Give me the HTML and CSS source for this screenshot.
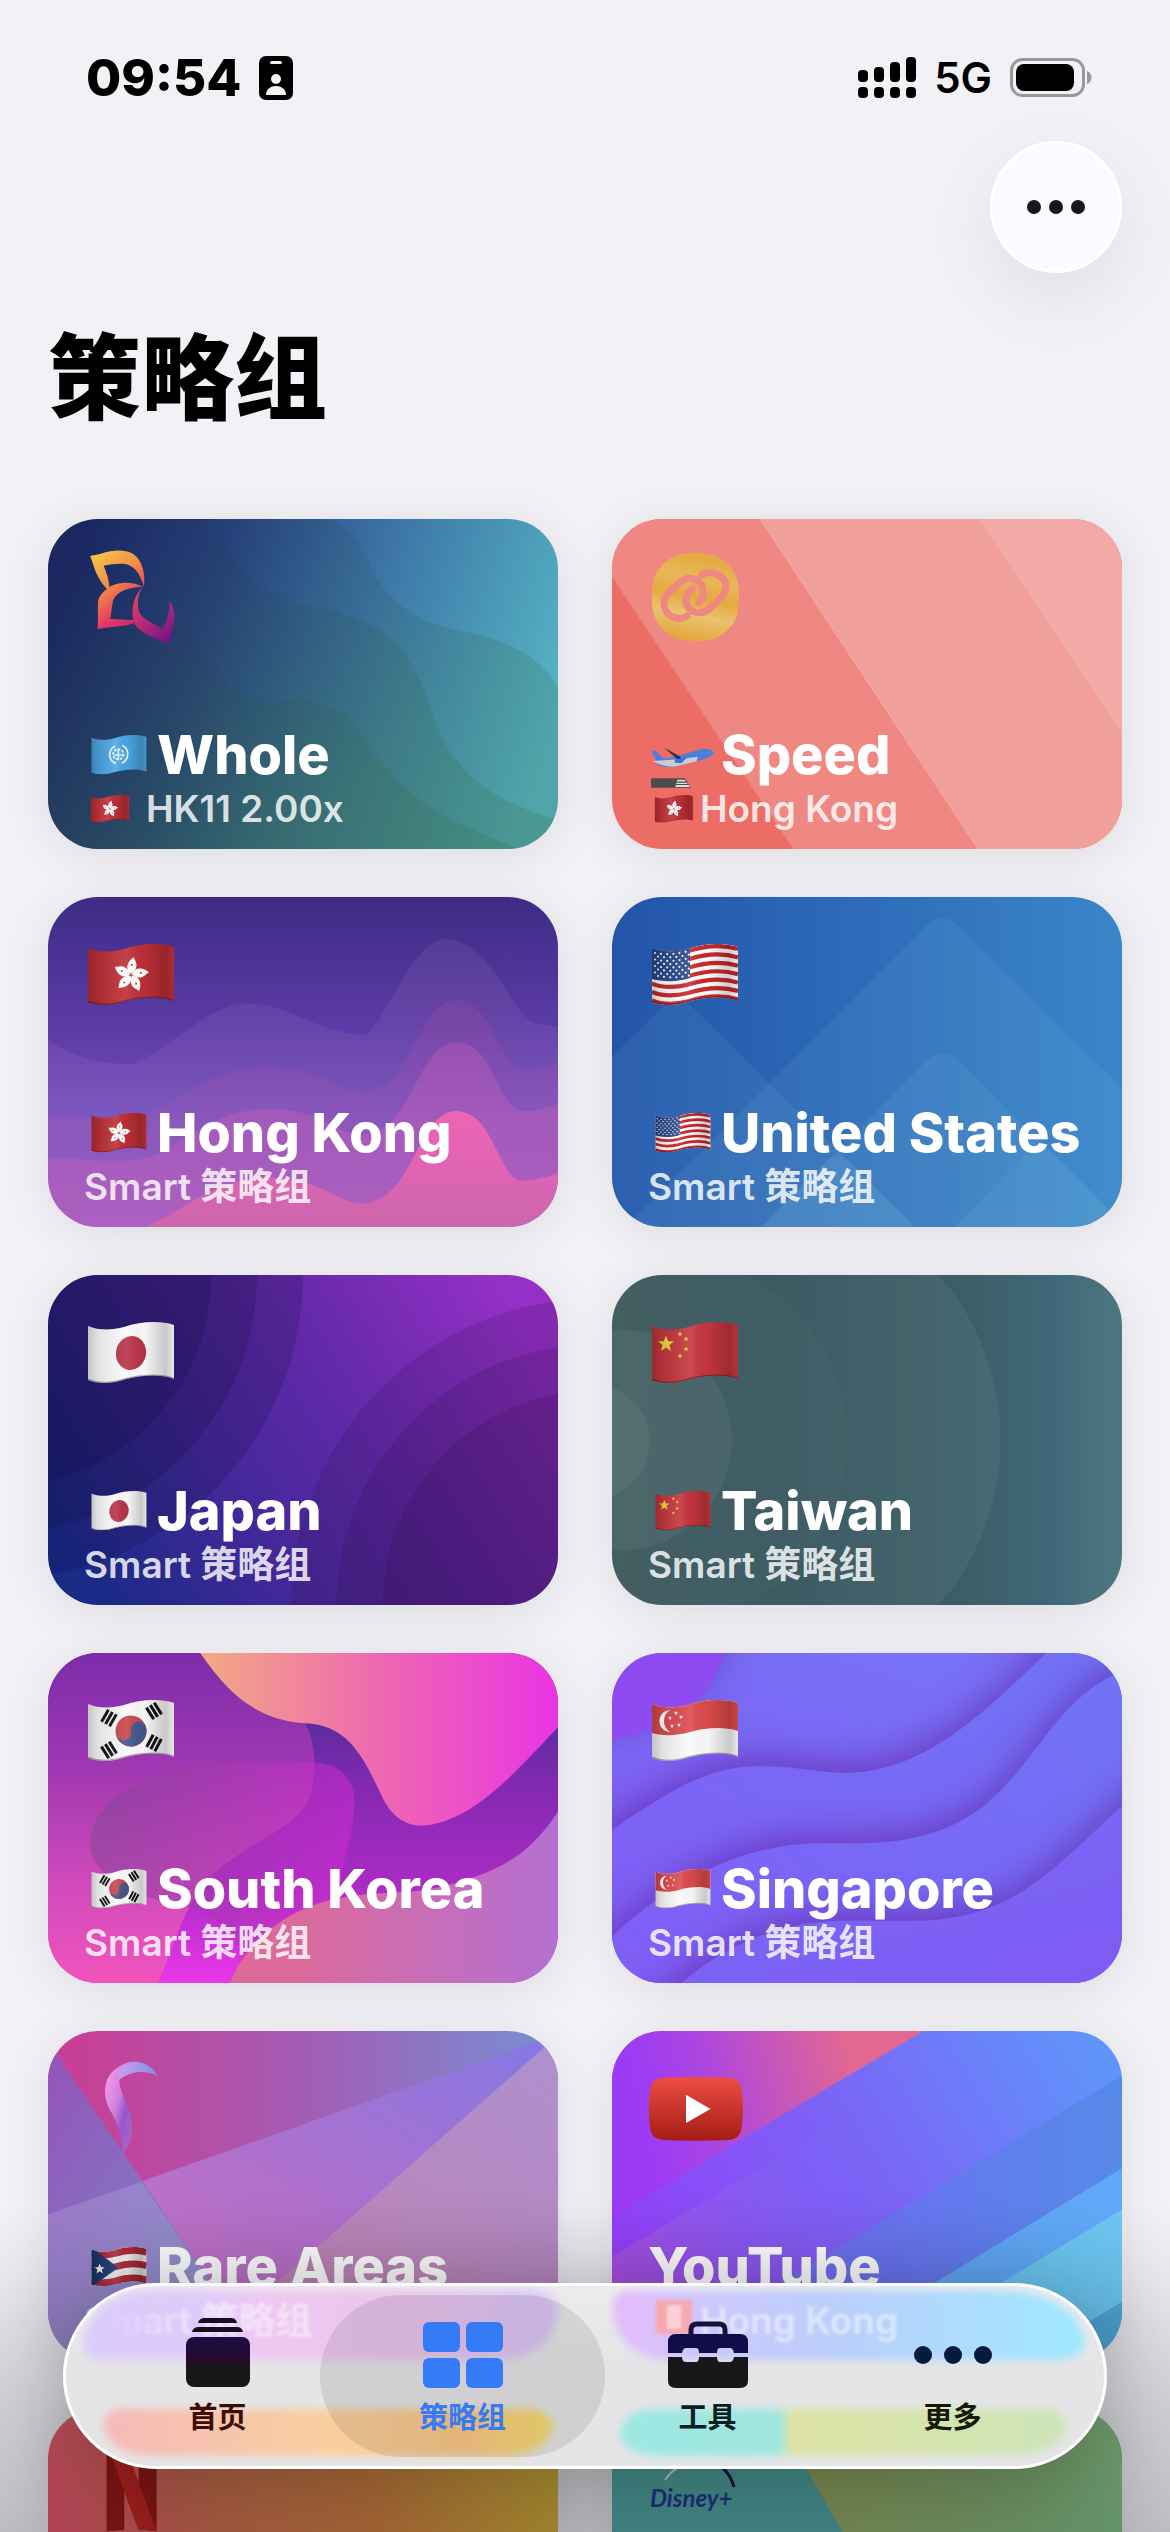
FILE: index.html
```html
<!DOCTYPE html>
<html lang="zh-CN">
<head>
<meta charset="utf-8">
<meta name="viewport" content="width=device-width, initial-scale=1">
<title>策略组</title>
<link rel="stylesheet" href="styles.css">
</head>
<body>

<!-- shared flag symbols -->
<svg class="sprite" width="0" height="0" aria-hidden="true">
  <defs>
    <clipPath id="wave"><path d="M0 4C10 8.500 24 8.500 36 5C52 0 70-2 86 3V57C70 51 52 54 38 57C24 62 10 62 0 58Z"/></clipPath>
    <linearGradient id="fold" x1="0" x2="1" y1="0" y2="0">
      <stop offset="0" stop-color="#000" stop-opacity=".22"/>
      <stop offset=".12" stop-color="#000" stop-opacity=".1"/>
      <stop offset=".45" stop-color="#fff" stop-opacity=".1"/>
      <stop offset=".65" stop-color="#000" stop-opacity=".02"/>
      <stop offset=".9" stop-color="#000" stop-opacity=".2"/>
      <stop offset="1" stop-color="#000" stop-opacity=".08"/>
    </linearGradient>
    <path id="star" d="M0-10L2.600-3.200L9.500-3.100L4 1.200L5.900 8.100L0 4.100L-5.900 8.100L-4 1.200L-9.500-3.100L-2.600-3.200Z"/>
    <path id="edge" d="M0 58C10 62 24 62 38 57C52 54 70 51 86 57" fill="none" stroke="#000" stroke-opacity=".3" stroke-width="2.500"/>
    <path id="stripe" d="M0 6C10 10 24 10 36 7C52 2 70 0 86 5" fill="none" stroke="#c9282d" stroke-width="4.200"/>
    <g id="stripes">
      <use href="#stripe"/><use href="#stripe" y="8.400"/><use href="#stripe" y="16.800"/><use href="#stripe" y="25.200"/>
      <use href="#stripe" y="33.600"/><use href="#stripe" y="42"/><use href="#stripe" y="50.400"/>
    </g>
    <g id="bars"><path d="M-6-4H6M-6 0H6M-6 4H6" stroke="#111" stroke-width="2.600"/></g>
  </defs>
  <symbol id="flag-hk" viewBox="0 0 86 62">
    <g clip-path="url(#wave)"><path fill="#bd2f36" d="M0 0H86V62H0Z"/>
      <g fill="#fff" transform="translate(43 31)">
        <g id="petal"><path d="M0-1C-5-4-6-12 3-18C3-15 7-12 5-7C4-4 2-3 0-1Z"/><circle cx="1" cy="-10" r="1" fill="#bd2f36"/></g>
        <use href="#petal" transform="rotate(72)"/><use href="#petal" transform="rotate(144)"/><use href="#petal" transform="rotate(216)"/><use href="#petal" transform="rotate(288)"/>
      </g>
      <path fill="url(#fold)" d="M0 0H86V62H0Z"/><use href="#edge"/></g>
  </symbol>
  <symbol id="flag-us" viewBox="0 0 86 62">
    <g clip-path="url(#wave)"><path fill="#fff" d="M0 0H86V62H0Z"/><use href="#stripes"/>
      <path fill="#2a4a8c" d="M0 0H38V34C26 38 12 38 0 35Z"/>
      <g stroke="#fff" stroke-width="2.200" stroke-linecap="round" stroke-dasharray="0 6.200" fill="none">
        <path d="M3 9Q18 12 37 7M6 12.500Q20 15 37 10.500M3 15.500Q18 19 37 14M6 19Q20 22 37 17.500M3 22Q18 25.500 37 21M6 25.500Q20 28.500 37 24.500M3 28.500Q18 32 37 28M6 32Q20 35 37 31.500"/>
      </g>
      <path fill="url(#fold)" d="M0 0H86V62H0Z"/><use href="#edge"/></g>
  </symbol>
  <symbol id="flag-jp" viewBox="0 0 86 62">
    <g clip-path="url(#wave)"><path fill="#fbfbfb" d="M0 0H86V62H0Z"/>
      <ellipse cx="43" cy="31" rx="15" ry="17" fill="#b93248" transform="rotate(12 43 31)"/>
      <path fill="url(#fold)" d="M0 0H86V62H0Z"/><use href="#edge"/></g>
  </symbol>
  <symbol id="flag-cn" viewBox="0 0 86 62">
    <g clip-path="url(#wave)"><path fill="#c5363d" d="M0 0H86V62H0Z"/>
      <g fill="#f0d83a"><use href="#star" transform="translate(14 22) scale(.85)"/><use href="#star" transform="translate(28 12) scale(.27)"/><use href="#star" transform="translate(34 17) scale(.27)"/><use href="#star" transform="translate(34 27) scale(.27)"/><use href="#star" transform="translate(28 34) scale(.27)"/></g>
      <path fill="url(#fold)" d="M0 0H86V62H0Z"/><use href="#edge"/></g>
  </symbol>
  <symbol id="flag-sg" viewBox="0 0 86 62">
    <g clip-path="url(#wave)"><path fill="#fbfbfb" d="M0 0H86V62H0Z"/>
      <path fill="#dd4a4c" d="M0 0H86V31C70 26 54 28 38 32C24 36 10 36 0 33Z"/>
      <path fill="#fff" d="M18 10C4 11 4 31 18 32C10 27 10 15 18 10Z"/>
      <g fill="#fff"><use href="#star" transform="translate(24 13) scale(.22)"/><use href="#star" transform="translate(18 18) scale(.22)"/><use href="#star" transform="translate(29 17) scale(.22)"/><use href="#star" transform="translate(20 26) scale(.22)"/><use href="#star" transform="translate(27 25) scale(.22)"/></g>
      <path fill="url(#fold)" d="M0 0H86V62H0Z"/><use href="#edge"/></g>
  </symbol>
  <symbol id="flag-kr" viewBox="0 0 86 62">
    <g clip-path="url(#wave)"><path fill="#fbfbfb" d="M0 0H86V62H0Z"/>
      <g transform="rotate(-12 43 31)"><circle cx="43" cy="31" r="15.500" fill="#c6474c"/>
        <path fill="#44558a" d="M27.500 31A15.500 15.500 0 0 0 58.500 31A7.750 7.750 0 0 0 43 31A7.750 7.750 0 0 1 27.500 31Z"/></g>
      <use href="#bars" transform="translate(21 18) rotate(-60) scale(1.150)"/><use href="#bars" transform="translate(66 11) rotate(58) scale(1.150)"/>
      <use href="#bars" transform="translate(21 50) rotate(58) scale(1.150)"/><use href="#bars" transform="translate(66 43) rotate(-62) scale(1.150)"/>
      <path fill="url(#fold)" d="M0 0H86V62H0Z"/><use href="#edge"/></g>
  </symbol>
  <symbol id="flag-un" viewBox="0 0 86 62">
    <g clip-path="url(#wave)"><path fill="#4ba6e4" d="M0 0H86V62H0Z"/>
      <g fill="none" stroke="#e6f4ff"><circle cx="42" cy="30" r="8" stroke-width="3" stroke-dasharray="4 2"/><path stroke-width="2.500" d="M37 17C25 24 26 39 38 44M48 16C60 22 59 38 47 44M36 31H49M42 23V38"/></g>
      <path fill="url(#fold)" d="M0 0H86V62H0Z"/></g>
  </symbol>
  <symbol id="flag-pr" viewBox="0 0 86 62">
    <g clip-path="url(#wave)"><path fill="#f6f6f6" d="M0 0H86V62H0Z"/>
      <g fill="none" stroke="#b52c3c" stroke-width="10.500"><path id="pr1" d="M0 9C10 13 24 13 36 10C52 5 70 3 86 8"/><use href="#pr1" y="21"/><use href="#pr1" y="43"/></g>
      <path fill="#1d3a74" d="M0 0V62L42 32Z"/><use href="#star" fill="#fff" transform="translate(13 34) scale(.85)"/>
      <path fill="url(#fold)" d="M0 0H86V62H0Z"/><use href="#edge"/></g>
  </symbol>
</svg>

<div class="screen">
  <header class="top">
    <div class="status">
      <div class="status-side">
        <span class="clock">09:54</span>
        <svg width="34" height="44" viewBox="0 0 34 44" aria-hidden="true"><rect width="34" height="44" rx="7"/><g fill="#f2f1f6"><rect x="11" y="5" width="12" height="3" rx="1.500"/><circle cx="17" cy="23" r="5"/><path d="M7 39C7 27 27 27 27 39Z"/></g></svg>
      </div>
      <div class="status-side">
        <svg width="58" height="42" viewBox="0 0 58 42" aria-hidden="true"><rect y="13" width="10" height="12" rx="4"/><rect x="16" y="10" width="10" height="15" rx="4"/><rect x="32" y="5" width="10" height="20" rx="4"/><rect x="48" width="10" height="25" rx="4"/><rect y="30" width="10" height="11" rx="4"/><rect x="16" y="30" width="10" height="11" rx="4"/><rect x="32" y="30" width="10" height="11" rx="4"/><rect x="48" y="30" width="10" height="11" rx="4"/></svg>
        <span class="network">5G</span>
        <svg width="82" height="40" viewBox="0 0 82 40" aria-hidden="true"><rect x="1.500" y="1.500" width="72" height="36" rx="11" fill="none" stroke="#98979b" stroke-width="3"/><rect x="6" y="6" width="58" height="27" rx="8"/><path fill="#98979b" d="M77 13C83 15 83 24 77 26Z"/></svg>
      </div>
    </div>
    <button class="more" type="button" aria-label="更多选项">
      <svg width="60" height="16" viewBox="0 0 60 16" aria-hidden="true"><circle cx="8" cy="8" r="7"/><circle cx="30" cy="8" r="7"/><circle cx="52" cy="8" r="7"/></svg>
    </button>
    <h1>策略组</h1>
  </header>

  <main class="grid">
    <a class="card" href="#whole">
      <svg class="art" viewBox="50 57 1428 990" preserveAspectRatio="none" aria-hidden="true">
        <defs><linearGradient id="g1" x1="0" y1=".4" x2="1" y2=".6"><stop offset="0" stop-color="#1b2766"/><stop offset=".28" stop-color="#274380"/><stop offset=".6" stop-color="#3d78a8"/><stop offset="1" stop-color="#56b4c4"/></linearGradient>
        <linearGradient id="g1s" gradientUnits="userSpaceOnUse" x1="150" y1="150" x2="800" y2="950"><stop offset="0" stop-color="#1a2a50" stop-opacity=".1"/><stop offset="1" stop-color="#34683e" stop-opacity=".2"/></linearGradient></defs>
        <path fill="url(#g1)" d="M50 57H1478V1047H50Z"/>
        <g fill="url(#g1s)">
          <path d="M820 57C960 90 920 200 1020 300C1130 400 1200 380 1290 415C1380 450 1430 480 1478 560V1047H50V57Z"/>
          <path d="M505 57C580 200 600 280 830 330C1000 365 1060 450 1110 590C1150 710 1180 870 1478 960V1047H50V57Z"/>
          <path d="M100 57C150 200 150 330 340 360C500 380 500 480 560 550C620 620 680 600 740 600C900 605 920 700 970 770C1070 900 1120 940 1370 1047H50V57Z"/>
        </g>
      </svg>
      <svg class="icon" viewBox="151 147 269 288" preserveAspectRatio="none" aria-hidden="true">
        <defs><linearGradient id="r" gradientUnits="userSpaceOnUse" x1="180" y1="160" x2="400" y2="420"><stop offset="0" stop-color="#f6c845"/><stop offset=".3" stop-color="#f08a48"/><stop offset=".52" stop-color="#e83a62"/><stop offset=".75" stop-color="#b02878"/><stop offset="1" stop-color="#6c1285"/></linearGradient></defs>
        <g fill="url(#r)"><path d="M168 168L196 162C230 150 250 150 268 154C310 160 325 215 319 262C312 235 300 200 268 192C245 190 225 193 206 197C215 220 222 245 222 262L216 268C180 225 180 195 168 168Z"/><path d="M216 266C240 245 285 242 316 260C280 262 245 270 233 300C228 320 228 340 225 357C250 355 275 362 292 360L290 370C265 382 225 378 189 388C192 350 188 320 191 300C195 285 205 275 216 266Z"/><path d="M317 260C300 280 300 310 305 335C320 365 350 370 370 386C385 360 392 335 391 303C405 325 408 350 401 375C396 400 394 415 389 432C350 412 300 400 289 362C283 325 290 285 317 260Z"/></g>
      </svg>
      <h2><svg class="flag" aria-hidden="true"><use href="#flag-un"/></svg>Whole</h2>
      <p><svg class="mini wide" aria-hidden="true"><use href="#flag-hk"/></svg>HK11 2.00x</p>
    </a>

    <a class="card" href="#speed">
      <svg class="art" viewBox="62 57 1428 990" preserveAspectRatio="none" aria-hidden="true">
        <path fill="#ec6c66" d="M62 57H1490V1047H62Z"/><path fill="#ef8882" d="M62 57H1490V1047H570L62 230Z"/><path fill="#f19f9a" stroke="#f5b5b1" stroke-width="2" d="M476 57H1490V1047H1087Z"/><path fill="#f2aaa7" d="M1088 57H1490V700Z"/>
      </svg>
      <svg class="icon" viewBox="0 0 96 96" aria-hidden="true">
        <defs><linearGradient id="gold" x1=".6" y1="0" x2=".4" y2="1"><stop offset="0" stop-color="#e4a93f"/><stop offset=".3" stop-color="#e9b658"/><stop offset=".5" stop-color="#e5a940"/><stop offset=".7" stop-color="#eac270"/><stop offset="1" stop-color="#e3a636"/></linearGradient></defs>
        <rect x="4" y="4" width="87" height="88" rx="38" fill="url(#gold)"/>
        <g fill="none" stroke="#ef8882" stroke-width="7" stroke-linecap="round"><path d="M39 67C31 73 16 67 16 55C15 47 22 43 32 33C44 24 55 33 55 42C56 48 54 51 51 54"/><path d="M54 26C63 20 76 26 78 36C79 45 72 49 61 60C53 67 40 64 38 53C37 46 41 42 45 39"/></g>
      </svg>
      <h2><svg class="flag" viewBox="182 703 154 119" preserveAspectRatio="none" aria-hidden="true"><path fill="#4a7fe0" d="M173 750L182 749L206 774L240 768L305 746Q335 740 344 755Q345 766 300 780L240 796Q205 800 190 792Z"/><path fill="#c9cdd2" d="M176 780L240 776L300 768L296 782L240 796Q205 800 176 780Z"/><path fill="#2b3340" d="M207 741L250 766L258 778L245 777Z"/><path fill="#3e6fd4" d="M235 776L270 770L255 786L238 786Z"/><path fill="#4c4c4c" d="M171 832H264L281 860H171Z"/><path fill="#ddd" d="M243 836H264L267 841H242ZM241 845H270L272 849H240ZM239 852H275L278 858H238Z"/></svg>Speed</h2>
      <p><svg class="mini" aria-hidden="true"><use href="#flag-hk"/></svg>Hong Kong</p>
    </a>

    <a class="card" href="#hong-kong">
      <svg class="art" viewBox="50 51 1428 990" preserveAspectRatio="none" aria-hidden="true">
        <defs><linearGradient id="g3" x1="0" y1="0" x2="0" y2="1"><stop offset="0" stop-color="#3d2c86"/><stop offset=".4" stop-color="#5d3ba6"/><stop offset=".68" stop-color="#7550bf"/><stop offset="1" stop-color="#8a5cc8"/></linearGradient>
        <linearGradient id="g3b" x1="0" y1="0" x2="0" y2="1"><stop offset="0" stop-color="#ee65b3"/><stop offset=".45" stop-color="#e264b4"/><stop offset="1" stop-color="#cb66ad"/></linearGradient></defs>
        <path fill="url(#g3)" d="M50 51H1478V1041H50Z"/>
        <path fill="#e0b0d0" fill-opacity=".09" d="M50 480C120 530 200 555 290 553C400 500 500 370 610 370C730 375 800 455 938 467C1000 420 1070 178 1165 177C1290 180 1350 410 1415 430L1478 440V1041H50Z"/>
        <path fill="#c854a8" fill-opacity=".17" d="M50 710C150 705 220 720 330 700C430 660 500 560 680 560C820 565 860 640 935 638C1080 620 1080 362 1195 360C1300 365 1310 560 1375 568C1420 568 1450 555 1478 545V1041H50Z"/>
        <path fill="#d060bc" fill-opacity=".34" d="M50 836C150 831 220 855 330 833C430 800 500 686 680 686C820 691 860 766 935 764C1080 746 1080 488 1195 486C1300 491 1310 686 1375 693C1420 693 1450 681 1478 671V1041H50Z"/>
        <path fill="url(#g3b)" d="M320 1041C430 1000 500 893 680 893C820 898 860 972 935 971C1080 955 1080 695 1195 693C1300 698 1310 895 1375 902C1420 902 1450 889 1478 879V1041Z"/>
      </svg>
      <svg class="big-flag" aria-hidden="true"><use href="#flag-hk"/></svg>
      <h2><svg class="flag" aria-hidden="true"><use href="#flag-hk"/></svg>Hong Kong</h2>
      <p>Smart 策略组</p>
    </a>

    <a class="card" href="#united-states">
      <svg class="art" viewBox="62 51 1428 990" preserveAspectRatio="none" aria-hidden="true">
        <defs><linearGradient id="g4"><stop offset="0" stop-color="#2354a9"/><stop offset=".5" stop-color="#2e6cb9"/><stop offset="1" stop-color="#3a86c9"/></linearGradient></defs>
        <path fill="url(#g4)" d="M62 51H1490V1041H62Z"/>
        <g fill="#8fd0e8" fill-opacity=".09"><path d="M100 1041L945 135Q985 92 1030 135L1490 625V1041Z"/><path d="M480 1041L945 540Q985 498 1030 540L1490 1030V1041Z"/><path d="M62 530L205 380Q245 340 285 380L910 1041H62Z"/><path d="M480 1041L660 845Q695 805 735 850L910 1041Z"/><path d="M1022 1041L1225 815Q1260 780 1295 815L1490 1030V1041Z"/></g>
      </svg>
      <svg class="big-flag" aria-hidden="true"><use href="#flag-us"/></svg>
      <h2><svg class="flag" aria-hidden="true"><use href="#flag-us"/></svg>United States</h2>
      <p>Smart 策略组</p>
    </a>

    <a class="card" href="#japan">
      <svg class="art" viewBox="50 45 1428 990" preserveAspectRatio="none" aria-hidden="true">
        <defs><linearGradient id="g5" x1="0" y1=".7" x2="1" y2=".3"><stop offset="0" stop-color="#1a2a86"/><stop offset=".3" stop-color="#402898"/><stop offset=".6" stop-color="#6029a8"/><stop offset="1" stop-color="#9430c6"/></linearGradient></defs>
        <path fill="url(#g5)" d="M50 45H1478V1035H50Z"/>
        <g fill="#0c0830" fill-opacity=".17"><ellipse cx="-87" cy="45" rx="851" ry="912"/><ellipse cx="-87" cy="45" rx="722" ry="774"/><ellipse cx="-87" cy="45" rx="594" ry="636"/></g>
        <g fill="#2a0a44" fill-opacity=".17"><ellipse cx="1589" cy="1035" rx="858" ry="920"/><ellipse cx="1589" cy="1035" rx="731" ry="783"/><ellipse cx="1589" cy="1035" rx="602" ry="645"/></g>
      </svg>
      <svg class="big-flag" aria-hidden="true"><use href="#flag-jp"/></svg>
      <h2><svg class="flag" aria-hidden="true"><use href="#flag-jp"/></svg>Japan</h2>
      <p>Smart 策略组</p>
    </a>

    <a class="card" href="#taiwan">
      <svg class="art" viewBox="62 45 1428 990" preserveAspectRatio="none" aria-hidden="true">
        <defs><linearGradient id="g6"><stop offset="0" stop-color="#365456"/><stop offset=".2" stop-color="#34525a"/><stop offset=".3" stop-color="#33515a"/><stop offset=".7" stop-color="#3b5f68"/><stop offset=".87" stop-color="#416879"/><stop offset="1" stop-color="#4e7780"/></linearGradient></defs>
        <path fill="url(#g6)" d="M62 45H1490V1035H62Z"/>
        <g fill="#fff" fill-opacity=".05"><ellipse cx="440" cy="540" rx="710" ry="759"/><ellipse cx="205" cy="540" rx="517" ry="555" fill-opacity=".02"/><ellipse cx="90" cy="540" rx="308" ry="330"/><ellipse cx="6" cy="545" rx="161" ry="173"/></g>
      </svg>
      <svg class="big-flag" aria-hidden="true"><use href="#flag-cn"/></svg>
      <h2><svg class="flag" aria-hidden="true"><use href="#flag-cn"/></svg>Taiwan</h2>
      <p>Smart 策略组</p>
    </a>

    <a class="card" href="#south-korea">
      <svg class="art" viewBox="50 39 1428 990" preserveAspectRatio="none" aria-hidden="true">
        <defs>
          <linearGradient id="g7" x1="0" y1="0" x2="0" y2="1"><stop offset=".2" stop-color="#5a2c9f"/><stop offset=".42" stop-color="#8529b2"/><stop offset=".7" stop-color="#aa2bc4"/><stop offset="1" stop-color="#ea36e8"/></linearGradient>
          <linearGradient id="g7a" x1="0" y1="0" x2="0" y2="1"><stop offset="0" stop-color="#7d2cab"/><stop offset=".35" stop-color="#a038b2"/><stop offset=".7" stop-color="#d04abb"/><stop offset="1" stop-color="#f054bc"/></linearGradient>
          <linearGradient id="g7b"><stop offset="0" stop-color="#7a4890" stop-opacity=".5"/><stop offset="1" stop-color="#d82ad4" stop-opacity=".5"/></linearGradient>
          <linearGradient id="g7c"><stop offset="0" stop-color="#f3a985"/><stop offset=".5" stop-color="#ee68b0"/><stop offset="1" stop-color="#ea34e4"/></linearGradient>
          <linearGradient id="g7d"><stop offset="0" stop-color="#de6a96"/><stop offset=".2" stop-color="#db6a9c"/><stop offset="1" stop-color="#b470d2"/></linearGradient>
        </defs>
        <path fill="url(#g7)" d="M50 39H1478V1029H50Z"/>
        <path fill="url(#g7a)" d="M50 39H476C560 170 640 240 770 250C800 310 805 400 780 480C740 570 600 610 500 715C420 820 400 930 358 1029H50Z"/>
        <path fill="url(#g7b)" d="M168 610C170 450 400 365 640 366L790 366C870 370 910 420 908 490C905 580 880 640 870 720L780 1029H610C600 900 520 810 430 800C330 780 168 720 168 610Z"/>
        <path fill="url(#g7c)" d="M476 39C560 170 640 240 770 250C900 255 940 370 990 480C1040 580 1120 570 1210 520C1300 470 1400 350 1478 262V39Z"/>
        <path fill="url(#g7d)" d="M560 1029C600 920 680 850 760 810C900 745 1010 770 1130 745C1320 700 1400 640 1478 515V1029Z"/>
      </svg>
      <svg class="big-flag" aria-hidden="true"><use href="#flag-kr"/></svg>
      <h2><svg class="flag" aria-hidden="true"><use href="#flag-kr"/></svg>South Korea</h2>
      <p>Smart 策略组</p>
    </a>

    <a class="card" href="#singapore">
      <svg class="art" viewBox="62 39 1428 990" preserveAspectRatio="none" aria-hidden="true">
        <defs>
          <linearGradient id="g8" gradientUnits="userSpaceOnUse" x1="500" y1="1100" x2="900" y2="100"><stop offset="0" stop-color="#8158f4"/><stop offset="1" stop-color="#7870f6"/></linearGradient>
          <linearGradient id="g8b" x1="0" y1=".8" x2="1" y2="0"><stop offset="0" stop-color="#825bf6"/><stop offset="1" stop-color="#6d78f6"/></linearGradient>
          <linearGradient id="g8c" x1="0" y1="0" x2=".5" y2="1"><stop offset="0" stop-color="#7275f6"/><stop offset="1" stop-color="#8058f4"/></linearGradient>
        </defs>
        <path fill="url(#g8)" d="M62 39H1490V1029H62Z"/>
        <path class="lift" fill="#8f4bf2" d="M-200-200H376V39C340 180 220 270 62 297H-200Z"/>
        <path class="lift" fill="url(#g8b)" d="M-200 760L62 570C250 430 350 378 475 378C600 380 640 400 730 398C950 390 1120 200 1278 39L1450-140H1800V1300H-200Z"/>
        <path class="lift" fill="url(#g8b)" d="M-200 1160L62 890C200 750 400 612 640 610C800 612 960 615 1100 500C1250 370 1300 190 1470 103L1800-40V1300H-200Z"/>
        <path class="lift" fill="url(#g8c)" d="M-50 1300L257 1029C430 870 600 842 720 842H930C1200 830 1300 680 1490 498L1800 200V1300Z"/>
      </svg>
      <svg class="big-flag" aria-hidden="true"><use href="#flag-sg"/></svg>
      <h2><svg class="flag" aria-hidden="true"><use href="#flag-sg"/></svg>Singapore</h2>
      <p>Smart 策略组</p>
    </a>

    <a class="card" href="#rare">
      <svg class="art" viewBox="128 63 1355 990" preserveAspectRatio="none" aria-hidden="true">
        <defs>
          <linearGradient id="g9"><stop offset="0" stop-color="#cb3c92"/><stop offset=".5" stop-color="#a45cb4"/><stop offset="1" stop-color="#7690d4"/></linearGradient>
          <linearGradient id="g9a" x1="0" y1="0" x2="1" y2="1"><stop offset="0" stop-color="#9650b8"/><stop offset="1" stop-color="#7494cc"/></linearGradient>
          <linearGradient id="g9b" x1="0" y1="1" x2="1" y2="0"><stop offset="0" stop-color="#d072bc"/><stop offset=".5" stop-color="#b070cc"/><stop offset="1" stop-color="#8478e4"/></linearGradient>
          <linearGradient id="g9c" x1=".2" y1="1" x2="1" y2="0"><stop offset="0" stop-color="#c080ae"/><stop offset="1" stop-color="#ae90d0"/></linearGradient>
        </defs>
        <path fill="url(#g9)" d="M128 63H1483V1053H128Z"/>
        <path fill="url(#g9b)" d="M128 613L1483 74V1053H128Z"/>
        <path fill="url(#g9a)" d="M110 63L700 1053H110Z"/>
        <path fill="#fff" fill-opacity=".14" d="M128 613L376 515L700 1053H128Z"/>
        <path fill="url(#g9c)" d="M1483 76V1053H500Z"/>
      </svg>
      <svg class="icon" viewBox="224 153 255 288" preserveAspectRatio="none" aria-hidden="true">
        <defs><linearGradient id="rb" x1="0" y1=".3" x2=".8" y2="1"><stop offset="0" stop-color="#ee96ec"/><stop offset=".4" stop-color="#d27edc"/><stop offset=".65" stop-color="#9458cc"/><stop offset="1" stop-color="#a864c8"/></linearGradient><linearGradient id="rt"><stop offset="0" stop-color="#cc9cf0"/><stop offset="1" stop-color="#8292e0"/></linearGradient></defs>
        <path fill="url(#rb)" d="M330 163C270 190 270 260 298 310C318 350 324 390 326 432C356 400 360 340 340 290C325 250 315 225 318 195Z"/><path fill="url(#rt)" d="M325 165C355 145 400 155 420 198C390 180 350 180 316 210C315 190 318 175 325 165Z"/>
      </svg>
      <h2><svg class="flag" aria-hidden="true"><use href="#flag-pr"/></svg>Rare Areas</h2>
      <p>Smart 策略组</p>
    </a>

    <a class="card" href="#youtube">
      <svg class="art" viewBox="85 63 1355 990" preserveAspectRatio="none" aria-hidden="true">
        <defs>
          <linearGradient id="g10" x1="0" y1=".6" x2="1" y2=".2"><stop offset="0" stop-color="#9340f8"/><stop offset=".5" stop-color="#7a64f6"/><stop offset="1" stop-color="#6094fb"/></linearGradient>
          <linearGradient id="g10a" gradientUnits="userSpaceOnUse" x1="150" y1="250" x2="720" y2="130"><stop offset="0" stop-color="#9c3bf5"/><stop offset=".3" stop-color="#aa44e2"/><stop offset="1" stop-color="#e26892"/></linearGradient>
          <linearGradient id="g10b" gradientUnits="userSpaceOnUse" x1="100" y1="800" x2="800" y2="500"><stop offset="0" stop-color="#a84ee4"/><stop offset="1" stop-color="#6c72f4" stop-opacity="0"/></linearGradient>
          <linearGradient id="g10c"><stop offset="0" stop-color="#8060ee"/><stop offset=".6" stop-color="#6578f0"/><stop offset="1" stop-color="#568ae8"/></linearGradient>
        </defs>
        <path fill="url(#g10)" d="M85 63H1440V1053H85Z"/>
        <path fill="url(#g10a)" d="M85 63H912L85 620Z"/>
        <path fill="url(#g10b)" d="M85 740L900 190V1053H85Z"/>
        <path fill="url(#g10c)" d="M1440 197V1053H185Z"/>
        <path fill="#60a8f7" d="M1440 475V1053H602Z"/><path fill="#6cc6f2" d="M1440 598V1053H780Z"/><path fill="#4fa8da" d="M1440 875V1053H1182Z"/>
      </svg>
      <svg class="icon" viewBox="181 153 255 288" preserveAspectRatio="none" aria-hidden="true">
        <defs><linearGradient id="yt" x1="0" y1="0" x2="0" y2="1"><stop offset="0" stop-color="#ef4d44"/><stop offset="1" stop-color="#a31c14"/></linearGradient></defs>
        <path fill="url(#yt)" d="M222 203Q308 199 395 203Q424 205 429 235Q438 296 429 358Q424 388 395 390Q308 394 222 390Q192 388 187 358Q179 296 187 235Q192 205 222 203Z"/><path fill="#fff" d="M282 254L347 297L282 339Z"/>
      </svg>
      <h2 class="plain">YouTube</h2>
      <p><svg class="mini" aria-hidden="true"><use href="#flag-hk"/></svg>Hong Kong</p>
    </a>

    <a class="card" href="#netflix" aria-label="Netflix">
      <svg class="art" viewBox="128 1197 1355 990" preserveAspectRatio="none" aria-hidden="true">
        <defs><linearGradient id="g11" x1="0" y1=".2" x2="1" y2="0"><stop offset="0" stop-color="#e0566a"/><stop offset=".3" stop-color="#d47454"/><stop offset=".6" stop-color="#d48444"/><stop offset="1" stop-color="#d4b83c"/></linearGradient></defs>
        <path fill="url(#g11)" d="M128 1197H1483V2187H128Z"/>
      </svg>
      <svg class="icon" viewBox="224 1287 255 288" preserveAspectRatio="none" aria-hidden="true"><path fill="#981a18" d="M284 1300H331V1560L284 1564ZM369 1300H417V1564L369 1558Z"/><path fill="#c42622" d="M284 1300H331L417 1564L368 1559Z"/></svg>
    </a>

    <a class="card" href="#disney">
      <svg class="art" viewBox="85 1197 1355 990" preserveAspectRatio="none" aria-hidden="true">
        <defs><linearGradient id="g12" x1="0" y1="0" x2="1" y2=".6"><stop offset="0" stop-color="#a0a85c"/><stop offset="1" stop-color="#7cc08e"/></linearGradient></defs>
        <path fill="#54acaa" d="M85 1197H1440V2187H85Z"/><path fill="url(#g12)" d="M509 1197H1440V2187H1015Z"/>
      </svg>
      <svg class="icon" viewBox="0 0 96 96" role="img" aria-label="Disney+">
        <g fill="none" stroke-width="2"><path stroke="#cfeef2" d="M17 41Q25 29 38 25"/><path stroke="#101850" stroke-width="3" d="M38 25Q76 14 86 48"/></g>
        <text class="disney" x="2" y="68">Disney+</text>
      </svg>
    </a>
  </main>

  <div class="dim"></div>

  <nav class="tabbar" aria-label="主导航">
    <svg class="glass" viewBox="0 0 1044 186" preserveAspectRatio="none" aria-hidden="true">
      <defs>
        <filter id="soft" x="-5%" y="-30%" width="110%" height="160%"><feGaussianBlur stdDeviation="4"/></filter>
        <filter id="haze"><feGaussianBlur stdDeviation="1.500"/></filter>
        <linearGradient id="b1"><stop offset="0" stop-color="#d9ccfb"/><stop offset=".25" stop-color="#e0cafa"/><stop offset=".4" stop-color="#efc8f1"/><stop offset=".7" stop-color="#eac4ee"/><stop offset="1" stop-color="#dac6f8"/></linearGradient>
        <linearGradient id="b2"><stop offset="0" stop-color="#f6b9b9"/><stop offset=".5" stop-color="#f9cf9f"/><stop offset=".8" stop-color="#fbc886"/><stop offset="1" stop-color="#f6dc70"/></linearGradient>
        <linearGradient id="b3"><stop offset="0" stop-color="#e5bbfb"/><stop offset=".2" stop-color="#ccc8fb"/><stop offset=".5" stop-color="#b9d0fb"/><stop offset=".8" stop-color="#aadffd"/><stop offset="1" stop-color="#9fe8ff"/></linearGradient>
        <linearGradient id="b4"><stop offset="0" stop-color="#9fe7e3"/><stop offset=".36" stop-color="#9fe7df"/><stop offset=".38" stop-color="#dde3a3"/><stop offset="1" stop-color="#cde4b8"/></linearGradient>
        <linearGradient id="fade" gradientUnits="userSpaceOnUse" x1="40" y1="0" x2="140" y2="0"><stop offset="0" stop-color="#fff" stop-opacity="0"/><stop offset="1" stop-color="#fff" stop-opacity=".5"/></linearGradient>
      </defs>
      <g filter="url(#soft)">
        <path fill="url(#b1)" d="M95 7H460Q495 7 495 28Q490 77 430 77H45Q20 77 20 60Q30 7 95 7Z"/>
        <path fill="url(#b2)" d="M58 126H470Q490 130 490 146Q482 172 440 173H100Q42 173 40 140Q42 126 58 126Z"/>
        <path fill="url(#b3)" d="M570 7H935C990 8 1018 30 1022 60Q1020 77 990 77H610C565 76 548 50 550 20Q552 7 570 7Z"/>
        <path fill="url(#b4)" d="M590 126H985Q1005 130 1003 146Q995 170 950 172L600 173Q558 172 557 150Q560 128 590 126Z"/>
      </g>
      <g filter="url(#haze)"><rect x="593" y="17" width="36" height="34" fill="#f8a8b0"/><path fill="#fbd0d6" d="M604 22H618V46H604Z"/>
        <text class="ghost" x="22" y="51" fill="url(#fade)">Smart 策略组</text><text class="ghost" x="637" y="51" fill="#fff" fill-opacity=".5">Hong Kong</text></g>
    </svg>
    <a class="tab" href="#home">
      <svg viewBox="0 0 80 72" aria-hidden="true"><defs><linearGradient id="k1" x1="0" y1="0" x2="0" y2="1"><stop offset="0" stop-color="#1c0c44"/><stop offset=".45" stop-color="#260a30"/><stop offset=".6" stop-color="#17171a"/></linearGradient></defs><path fill="#17101c" d="M20 5Q21 0 27 0H53Q58 0 59 5ZM14 14Q15 9 21 9H59Q64 9 65 14Z"/><rect x="8" y="19" width="64" height="50" rx="8" fill="url(#k1)"/></svg>
      <span class="warm">首页</span>
    </a>
    <a class="tab active" href="#policies" aria-current="page">
      <svg viewBox="0 0 80 72" fill="#357af6" aria-hidden="true"><rect y="4" width="37" height="30" rx="6"/><rect x="43" y="4" width="37" height="30" rx="6"/><rect y="40" width="37" height="30" rx="6"/><rect x="43" y="40" width="37" height="30" rx="6"/></svg>
      <span>策略组</span>
    </a>
    <a class="tab" href="#tools">
      <svg viewBox="0 0 80 72" aria-hidden="true"><path fill="none" stroke="#14103a" stroke-width="5" d="M23 18V12Q23 6 29 6H51Q57 6 57 12V18"/><path fill="#130c4a" d="M8 16H72Q80 16 80 24V35H66Q65 30 62 30H52Q49 30 49 35H31Q31 30 28 30H18Q15 30 14 35H0V24Q0 16 8 16Z"/><path fill="#17171a" d="M0 39H14Q14 44 18 44H28Q31 44 31 39H49Q49 44 52 44H62Q65 44 66 39H80V63Q80 70 72 70H8Q0 70 0 63Z"/></svg>
      <span class="cool">工具</span>
    </a>
    <a class="tab" href="#more">
      <svg viewBox="0 0 80 72" fill="#06193f" aria-hidden="true"><circle cx="10" cy="37" r="9"/><circle cx="40" cy="37" r="9"/><circle cx="70" cy="37" r="9"/></svg>
      <span class="olive">更多</span>
    </a>
  </nav>
</div>
</body>
</html>
```

FILE: styles.css
```css
* { box-sizing: border-box; }

body {
  margin: 0;
  background: #f2f1f6;
  color: #000;
  font-family: Inter, "Noto Sans CJK SC", sans-serif;
}

h1, h2, p { margin: 0; }
a { color: inherit; text-decoration: none; }

.sprite { position: absolute; }

.screen {
  position: relative;
  height: 100vh;
  overflow: hidden;
}

.top {
  display: flex;
  flex-direction: column;
  padding: 0 48px;
}

.status {
  display: flex;
  justify-content: space-between;
  align-items: center;
  padding: 48px 30px 33px 38px;
}

.status-side {
  display: flex;
  align-items: center;
  gap: 18px;
  height: 60px;
}

.clock { font-size: 51px; font-weight: 800; line-height: 60px; }
.network { font-size: 42px; font-weight: 600; line-height: 60px; }

.more {
  display: flex;
  align-items: center;
  justify-content: center;
  align-self: flex-end;
  width: 132px;
  height: 132px;
  padding: 0;
  border: 3px solid #fff;
  border-radius: 50%;
  background: #fafaff;
  box-shadow: 0 24px 72px rgba(0, 0, 0, .08);
  fill: #17171a;
}

h1 {
  padding-top: 45px;
  font-size: 93px;
  font-weight: 900;
  line-height: 120px;
}

.grid {
  display: grid;
  grid-template-columns: 1fr 1fr;
  gap: 48px 54px;
  padding: 81px 48px 0;
}

.card {
  position: relative;
  display: flex;
  flex-direction: column;
  height: 330px;
  padding: 30px 36px 16px;
  border-radius: 50px;
  color: #fff;
  box-shadow: 0 6px 48px rgba(0, 0, 0, .09);
}

.art {
  position: absolute;
  inset: 0;
  width: 100%;
  height: 100%;
  border-radius: 50px;
}

.lift { filter: drop-shadow(0 -30px 50px rgba(100, 40, 170, .65)); }

.icon {
  position: relative;
  width: 96px;
  height: 96px;
}

.big-flag {
  position: relative;
  width: 86px;
  height: 62px;
  margin: 17px 4px;
}

.card h2 {
  position: relative;
  display: flex;
  align-items: center;
  gap: 10px;
  margin-top: auto;
  padding-left: 7px;
  font-size: 54px;
  font-weight: 800;
  line-height: 60px;
  white-space: nowrap;
}

.card h2.plain { padding-left: 0; }

.flag { flex: none; width: 56px; height: 40px; overflow: visible; }

.card p {
  position: relative;
  display: flex;
  align-items: center;
  color: rgba(255, 255, 255, .84);
  font-size: 37px;
  font-weight: 600;
  line-height: 48px;
  white-space: nowrap;
}

.mini { width: 40px; height: 28px; margin: 0 6px; }
.mini.wide { margin-right: 16px; }

.disney {
  fill: #283c98;
  font: italic 700 24px Lato, sans-serif;
}

.dim {
  position: absolute;
  inset: auto 0 0;
  height: 330px;
  background: linear-gradient(rgba(0, 0, 0, 0), rgba(0, 0, 0, .06) 30%, rgba(0, 0, 0, .22));
}

.tabbar {
  position: absolute;
  right: 63px;
  bottom: 63px;
  left: 63px;
  display: flex;
  height: 186px;
  padding: 0 29px;
  border: 3px solid #fff;
  border-radius: 93px;
  background: linear-gradient(#ececee, #e5e5e7 40%);
  box-shadow: 0 16px 100px rgba(0, 0, 0, .32);
}

.glass {
  position: absolute;
  inset: -3px;
  width: calc(100% + 6px);
  height: calc(100% + 6px);
  border-radius: 93px;
}

.ghost { font-size: 37px; font-weight: 600; }

.tab {
  position: relative;
  display: flex;
  flex: 1;
  flex-direction: column;
  align-items: center;
  gap: 10px;
  padding-top: 32px;
  color: #17171a;
  font-size: 29px;
  font-weight: 700;
  line-height: 36px;
}

.tab svg { position: relative; width: 80px; height: 72px; }
.tab span { position: relative; }

.tab.active { color: #357af6; }

.tab.active::before {
  content: "";
  position: absolute;
  inset: 9px -20px;
  border-radius: 81px;
  background: rgba(0, 0, 0, .09);
}

.warm { color: #3c0c06; }
.cool { color: #08201e; }
.olive { color: #141a06; }
```
